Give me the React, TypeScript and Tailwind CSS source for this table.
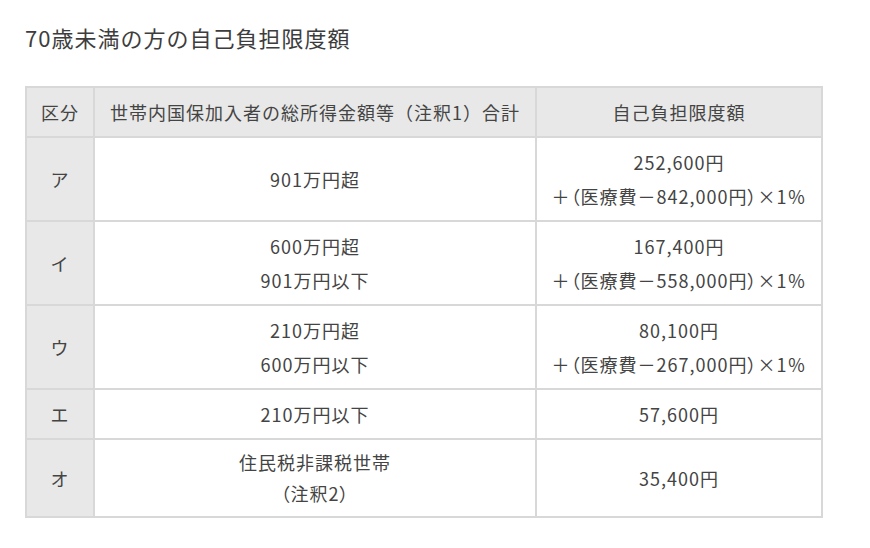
const rows: { k: string; income: string[]; limit: string[]; tight?: boolean }[] = [
  { k: "ア", income: ["901万円超"], limit: ["252,600円", "＋（医療費－842,000円）×1％"] },
  { k: "イ", income: ["600万円超", "901万円以下"], limit: ["167,400円", "＋（医療費－558,000円）×1％"] },
  { k: "ウ", income: ["210万円超", "600万円以下"], limit: ["80,100円", "＋（医療費－267,000円）×1％"] },
  { k: "エ", income: ["210万円以下"], limit: ["57,600円"] },
  { k: "オ", income: ["住民税非課税世帯", "（注釈2）"], limit: ["35,400円"], tight: true },
];

export default function App() {
  return (
    <div
      className="w-[870px] h-[548px] bg-white text-[#444] pl-[25px] pt-[22px]"
      style={{ fontFamily: '"Noto Sans CJK JP", "Noto Sans", sans-serif' }}
    >
      <h2 className="text-[22px] leading-[30px] tracking-[1px] text-[#3d3d3d]">70歳未満の方の自己負担限度額</h2>
      <table className="mt-[34px] w-[798px] border-collapse text-[18px] leading-[34px] tracking-[1px] text-center">
        <thead>
          <tr className="bg-[#e8e8e8]">
            <th className="w-[68px] border-2 border-[#d8d8d8] py-[7px] font-normal">区分</th>
            <th className="w-[442px] border-2 border-[#d8d8d8] py-[7px] font-normal">
              世帯内国保加入者の総所得金額等（注釈1）合計
            </th>
            <th className="border-2 border-[#d8d8d8] py-[7px] font-normal">自己負担限度額</th>
          </tr>
        </thead>
        <tbody>
          {rows.map((r) => (
            <tr key={r.k} className={r.tight ? "leading-[31px]" : ""}>
              <td className="bg-[#e8e8e8] border-2 border-[#d8d8d8] py-[7px]">{r.k}</td>
              <td className="border-2 border-[#d8d8d8] py-[7px] [font-feature-settings:'palt']">
                {r.income.map((t) => (
                  <div key={t}>{t}</div>
                ))}
              </td>
              <td className="border-2 border-[#d8d8d8] py-[7px] [font-feature-settings:'palt']">
                {r.limit.map((t) => (
                  <div key={t}>{t}</div>
                ))}
              </td>
            </tr>
          ))}
        </tbody>
      </table>
    </div>
  );
}
